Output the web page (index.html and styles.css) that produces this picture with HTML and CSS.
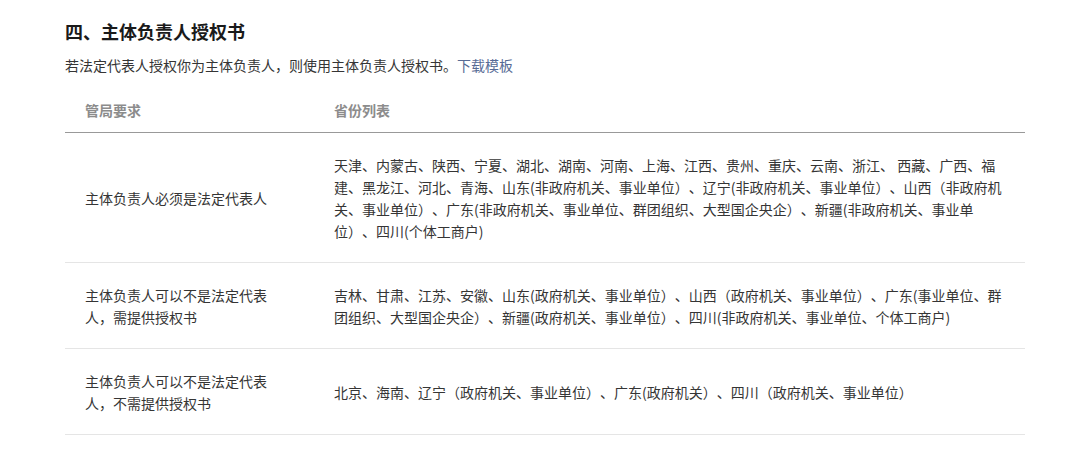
FILE: index.html
```html
<!DOCTYPE html>
<html lang="zh-CN">

<head>
    <meta charset="UTF-8">
    <meta name="viewport" content="width=device-width, initial-scale=1.0">
    <title>主体负责人授权书</title>
    <link rel="stylesheet" href="styles.css">
</head>

<body>

    <section class="auth">
        <h2 class="auth-title">四、主体负责人授权书</h2>
        <p class="auth-desc">若法定代表人授权你为主体负责人，则使用主体负责人授权书。<a href="#">下载模板</a></p>

        <table class="rule-table">
            <thead>
                <tr>
                    <th class="col-req">管局要求</th>
                    <th>省份列表</th>
                </tr>
            </thead>
            <tbody>
                <tr>
                    <td class="col-req">主体负责人必须是法定代表人</td>
                    <td>天津、内蒙古、陕西、宁夏、湖北、湖南、河南、上海、江西、贵州、重庆、云南、浙江、 西藏、广西、福建、黑龙江、河北、青海、山东(非政府机关、事业单位）、辽宁(非政府机关、事业单位）、山西（非政府机关、事业单位）、广东(非政府机关、事业单位、群团组织、大型国企央企）、新疆(非政府机关、事业单位）、四川(个体工商户)</td>
                </tr>
                <tr>
                    <td class="col-req">主体负责人可以不是法定代表人，需提供授权书</td>
                    <td>吉林、甘肃、江苏、安徽、山东(政府机关、事业单位）、山西（政府机关、事业单位）、广东(事业单位、群团组织、大型国企央企）、新疆(政府机关、事业单位）、四川(非政府机关、事业单位、个体工商户)</td>
                </tr>
                <tr>
                    <td class="col-req">主体负责人可以不是法定代表人，不需提供授权书</td>
                    <td>北京、海南、辽宁（政府机关、事业单位）、广东(政府机关）、四川（政府机关、事业单位）</td>
                </tr>
            </tbody>
        </table>
    </section>

</body>

</html>
```

FILE: styles.css
```css
body {
    margin: 0;
    padding: 0;
    background-color: #fff;
    font-family: "Noto Sans CJK SC", "Liberation Sans", sans-serif;
    color: #353535;
    text-spacing-trim: space-all;
}

.auth {
    width: 960px;
    padding: 18px 0 30px 65px;
}

.auth-title {
    margin: 0;
    font-size: 18px;
    line-height: 26px;
    font-weight: bold;
    color: #1a1a1a;
}

.auth-desc {
    margin: 10px 0 12px;
    font-size: 14px;
    line-height: 22px;
}

.auth-desc a {
    color: #576b95;
    text-decoration: none;
}

.rule-table {
    width: 960px;
    border-collapse: collapse;
    table-layout: fixed;
    font-size: 14px;
    line-height: 22px;
}

.rule-table th {
    text-align: left;
    font-weight: bold;
    color: #8c8c8c;
    padding: 11px 20px;
    border-bottom: 1px solid #999;
}

.rule-table td {
    padding: 21px 20px 20px;
    vertical-align: middle;
    border-bottom: 1px solid #e5e5e5;
}

.rule-table .col-req {
    width: 209px;
}
```
